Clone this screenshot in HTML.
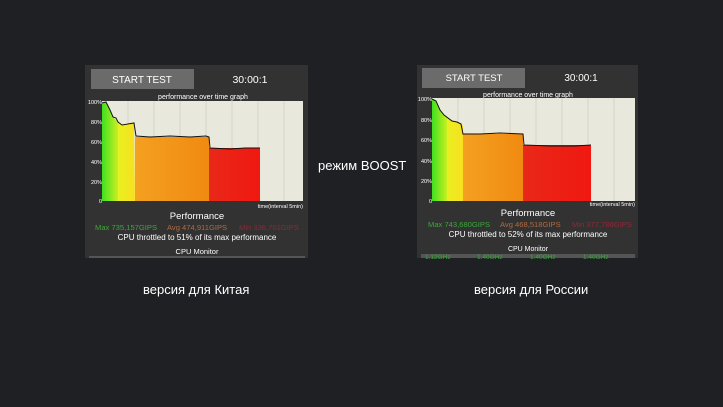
<!DOCTYPE html>
<html><head><meta charset="utf-8"><style>
body{margin:0;width:723px;height:407px;background:#1e2023;overflow:hidden;font-family:"Liberation Sans",sans-serif;position:relative}
.t{position:absolute;color:#fff;font-family:"Liberation Sans",sans-serif;white-space:nowrap}
</style></head><body>
<svg width="723" height="407" style="position:absolute;left:0;top:0" font-family="Liberation Sans, sans-serif">
<defs>
<linearGradient id="g1" x1="0" x2="1"><stop offset="0" stop-color="#3fe020"/><stop offset="1" stop-color="#c8f020"/></linearGradient>
<linearGradient id="g2" x1="0" x2="1"><stop offset="0" stop-color="#e8f020"/><stop offset="1" stop-color="#f8e020"/></linearGradient>
<linearGradient id="g3" x1="0" x2="1"><stop offset="0" stop-color="#f4a020"/><stop offset="1" stop-color="#f08a10"/></linearGradient>
<linearGradient id="g4" x1="0" x2="1"><stop offset="0" stop-color="#e82818"/><stop offset="1" stop-color="#f01810"/></linearGradient>
</defs>
<rect x="85" y="65" width="223" height="193" fill="#323232"/>
<rect x="91" y="69" width="103" height="20" fill="#6b6b6b"/>
<text x="142" y="83" fill="#fff" font-size="10" text-anchor="middle">START TEST</text>
<text x="250" y="83" fill="#fff" font-size="10.5" text-anchor="middle">30:00:1</text>
<text x="203" y="99" fill="#fff" font-size="7" text-anchor="middle">performance over time graph</text>
<rect x="102" y="101" width="201" height="100" fill="#e8e8dc"/>
<g stroke="#c8c8bc" stroke-width="0.6"><line x1="128" y1="101" x2="128" y2="201"/><line x1="154" y1="101" x2="154" y2="201"/><line x1="180" y1="101" x2="180" y2="201"/><line x1="206" y1="101" x2="206" y2="201"/><line x1="232" y1="101" x2="232" y2="201"/><line x1="258" y1="101" x2="258" y2="201"/><line x1="284" y1="101" x2="284" y2="201"/></g>
<path d="M102 201V103L106 102L110 110L114 118L118 122V201Z" fill="url(#g1)"/>
<path d="M118 201V122L122 125L126 124L130 124L134 123L135 201Z" fill="url(#g2)"/>
<rect x="135" y="137" width="74" height="64" fill="url(#g3)"/>
<rect x="209" y="148" width="51" height="53" fill="url(#g4)"/>
<path d="M102 103L106 102L110 110L113 117L116 118L118 122L122 125L134 123L136 136L150 137L170 136L190 137L206 136L209 137L210 148L230 149L245 148L260 148" fill="none" stroke="#111" stroke-width="1"/>
<g fill="#fff" font-size="5.5" text-anchor="end"><text x="102" y="104">100%</text><text x="102" y="124">80%</text><text x="102" y="144">60%</text><text x="102" y="164">40%</text><text x="102" y="184">20%</text><text x="102" y="203">0</text></g>
<text x="303" y="208" fill="#fff" font-size="5.5" text-anchor="end">time(interval 5min)</text>
<text x="197" y="219" fill="#fff" font-size="9.5" text-anchor="middle">Performance</text>
<text x="95" y="230" fill="#3aa83a" font-size="7.6">Max 735,157GIPS</text>
<text x="167" y="230" fill="#b06a40" font-size="7.6">Avg 474,911GIPS</text>
<text x="239" y="230" fill="#902838" font-size="7.6">Min 336,701GIPS</text>
<text x="197" y="240" fill="#fff" font-size="8" text-anchor="middle">CPU throttled to 51% of its max performance</text>
<text x="197" y="254" fill="#fff" font-size="7.5" text-anchor="middle">CPU Monitor</text>
<rect x="89" y="256" width="216" height="2" fill="#555"/>
<rect x="417" y="65" width="221" height="193" fill="#323232"/>
<rect x="422" y="68" width="103" height="20" fill="#6b6b6b"/>
<text x="474" y="81" fill="#fff" font-size="9.5" text-anchor="middle">START TEST</text>
<text x="581" y="81" fill="#fff" font-size="10" text-anchor="middle">30:00:1</text>
<text x="528" y="97" fill="#fff" font-size="7" text-anchor="middle">performance over time graph</text>
<rect x="432" y="98" width="203" height="103" fill="#e8e8dc"/>
<g stroke="#c8c8bc" stroke-width="0.6"><line x1="458" y1="98" x2="458" y2="201"/><line x1="484" y1="98" x2="484" y2="201"/><line x1="510" y1="98" x2="510" y2="201"/><line x1="536" y1="98" x2="536" y2="201"/><line x1="562" y1="98" x2="562" y2="201"/><line x1="588" y1="98" x2="588" y2="201"/><line x1="614" y1="98" x2="614" y2="201"/></g>
<path d="M432 201V99L436 101L440 110L444 115L447 117V201Z" fill="url(#g1)"/>
<path d="M447 201V117L452 121L457 122L461 124L463 126V201Z" fill="url(#g2)"/>
<rect x="463" y="134" width="60" height="67" fill="url(#g3)"/>
<rect x="523" y="145" width="68" height="56" fill="url(#g4)"/>
<path d="M432 99L436 101L440 110L444 115L452 121L457 122L461 124L463 134L480 134L500 133L523 134L524 145L550 146L575 146L591 145" fill="none" stroke="#111" stroke-width="1"/>
<g fill="#fff" font-size="5.5" text-anchor="end"><text x="432" y="101">100%</text><text x="432" y="122">80%</text><text x="432" y="142">60%</text><text x="432" y="163">40%</text><text x="432" y="183">20%</text><text x="432" y="203">0</text></g>
<text x="635" y="206" fill="#fff" font-size="5.5" text-anchor="end">time(interval 5min)</text>
<text x="528" y="216" fill="#fff" font-size="9.5" text-anchor="middle">Performance</text>
<text x="428" y="227" fill="#3aa83a" font-size="7.6">Max 743,680GIPS</text>
<text x="500" y="227" fill="#b06a40" font-size="7.6">Avg 468,518GIPS</text>
<text x="572" y="227" fill="#902838" font-size="7.6">Min 377,786GIPS</text>
<text x="528" y="237" fill="#fff" font-size="8" text-anchor="middle">CPU throttled to 52% of its max performance</text>
<text x="528" y="251" fill="#fff" font-size="7" text-anchor="middle">CPU Monitor</text>
<rect x="421" y="254" width="214" height="4" fill="#555"/>
<g fill="#3aa83a" font-size="6.5"><text x="425" y="259">1.12GHz</text><text x="477" y="259">1.40GHz</text><text x="530" y="259">1.40GHz</text><text x="583" y="259">1.40GHz</text></g>
</svg>
<div class="t" style="left:318px;top:158px;font-size:13px">режим BOOST</div>
<div class="t" style="left:143px;top:282px;font-size:13px">версия для Китая</div>
<div class="t" style="left:474px;top:282px;font-size:13px">версия для России</div>
</body></html>
